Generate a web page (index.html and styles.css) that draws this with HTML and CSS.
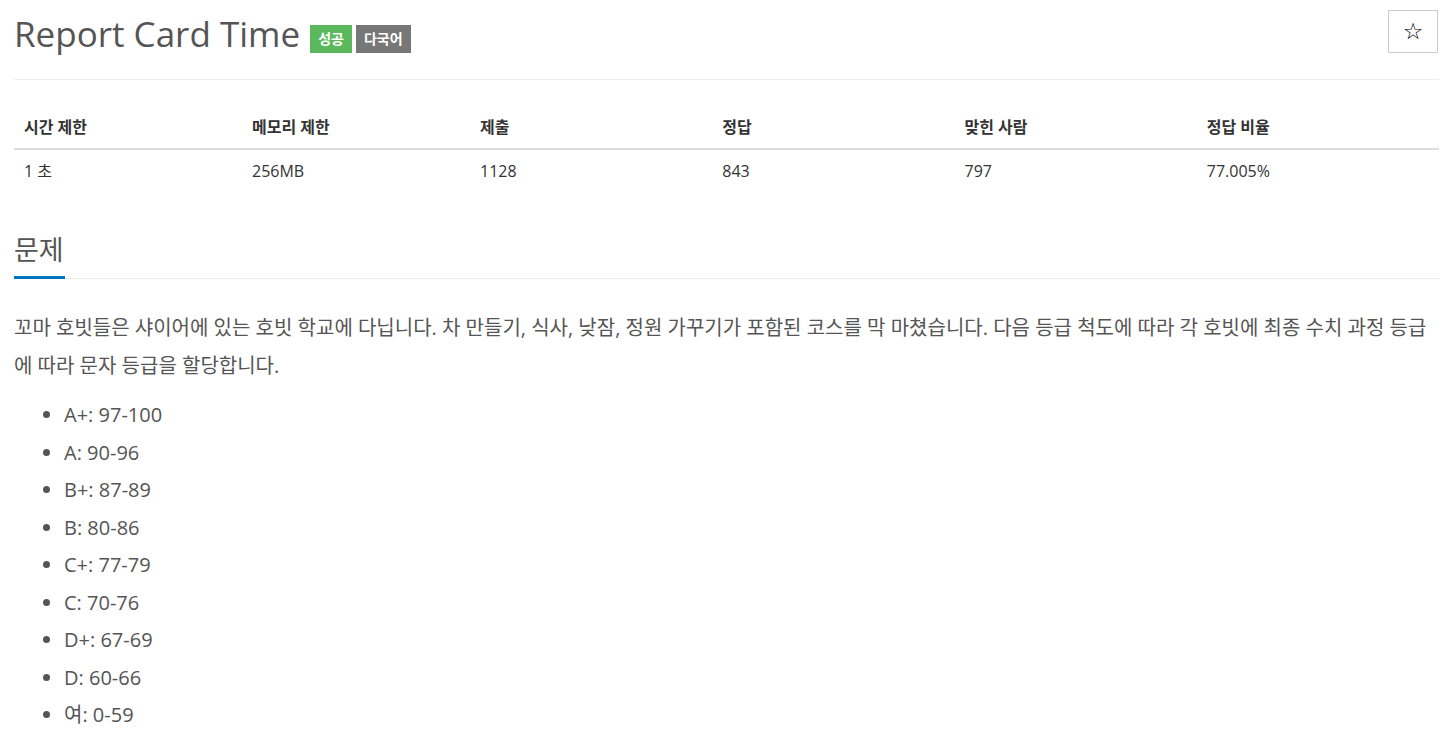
FILE: index.html
```html
<!DOCTYPE html>
<html lang="ko">
<head>
  <meta charset="UTF-8">
  <title>Report Card Time</title>
  <link rel="stylesheet" href="styles.css">
</head>
<body>
  <div class="page">
    <div class="page-header">
      <h1 class="title">Report Card Time <span class="label label-success">성공</span><span class="label label-default">다국어</span></h1>
      <button class="star-btn" type="button">☆</button>
    </div>

    <table class="info-table">
      <thead>
        <tr>
          <th class="col-sm">시간 제한</th>
          <th class="col-sm">메모리 제한</th>
          <th>제출</th>
          <th>정답</th>
          <th>맞힌 사람</th>
          <th>정답 비율</th>
        </tr>
      </thead>
      <tbody>
        <tr>
          <td>1 초</td>
          <td>256MB</td>
          <td>1128</td>
          <td>843</td>
          <td>797</td>
          <td>77.005%</td>
        </tr>
      </tbody>
    </table>

    <section class="problem-section">
      <div class="headline"><h2>문제</h2></div>
      <div class="problem-text">
        <p>꼬마 호빗들은 샤이어에 있는 호빗 학교에 다닙니다. 차 만들기, 식사, 낮잠, 정원 가꾸기가 포함된 코스를 막 마쳤습니다. 다음 등급 척도에 따라 각 호빗에 최종 수치 과정 등급에 따라 문자 등급을 할당합니다.</p>
        <ul>
          <li>A+: 97-100</li>
          <li>A: 90-96</li>
          <li>B+: 87-89</li>
          <li>B: 80-86</li>
          <li>C+: 77-79</li>
          <li>C: 70-76</li>
          <li>D+: 67-69</li>
          <li>D: 60-66</li>
          <li>여: 0-59</li>
        </ul>
      </div>
    </section>
  </div>
</body>
</html>
```

FILE: styles.css
```css
body {
  margin: 0;
  font-family: 'Open Sans', 'Noto Sans CJK KR', sans-serif;
  color: #333;
  background: #fff;
}

.page {
  padding: 0 5px 0 14px;
}

.page-header {
  display: flex;
  justify-content: space-between;
  align-items: flex-start;
  border-bottom: 1px solid #eee;
  height: 79px;
}

.title {
  margin: 0;
  padding-top: 9px;
  font-size: 35px;
  font-weight: 400;
  color: #555;
  line-height: 50px;
}

.label {
  display: inline-block;
  vertical-align: 3px;
  font-size: 14px;
  font-weight: 700;
  color: #fff;
  line-height: 28px;
  padding: 0 8px;
  margin-left: 4px;
}

.label-success {
  background-color: #5cb85c;
  margin-left: 1px;
}

.label-default {
  background-color: #777;
}

.star-btn {
  margin-top: 10px;
  margin-right: 1px;
  width: 50px;
  height: 43px;
  background: #fff;
  border: 1px solid #ccc;
  font-size: 23px;
  line-height: 1;
  color: #000;
  font-family: 'DejaVu Sans', sans-serif;
  cursor: pointer;
}

.info-table {
  width: 100%;
  border-collapse: collapse;
  margin-top: 26px;
  font-size: 16px;
}

.info-table th,
.info-table td {
  text-align: left;
  padding: 10px 10px;
  line-height: 22px;
}

.info-table th {
  font-weight: 700;
  border-bottom: 2px solid #ddd;
  width: 17%;
}

.info-table th.col-sm {
  width: 16%;
}

.problem-section {
  margin-top: 38px;
}

.headline {
  border-bottom: 1px dotted #ddd;
}

.headline h2 {
  display: inline-block;
  margin: 0 0 -1px;
  font-size: 27px;
  font-weight: 400;
  color: #555;
  line-height: 40px;
  padding: 0 1px 6px 0;
  border-bottom: 3px solid #0076c0;
}

.problem-text {
  font-size: 20px;
  color: #555;
  line-height: 37.5px;
}

.problem-text p {
  margin: 30px 0 12px;
}

.problem-text ul {
  margin: 0;
  padding-left: 50px;
}
```
